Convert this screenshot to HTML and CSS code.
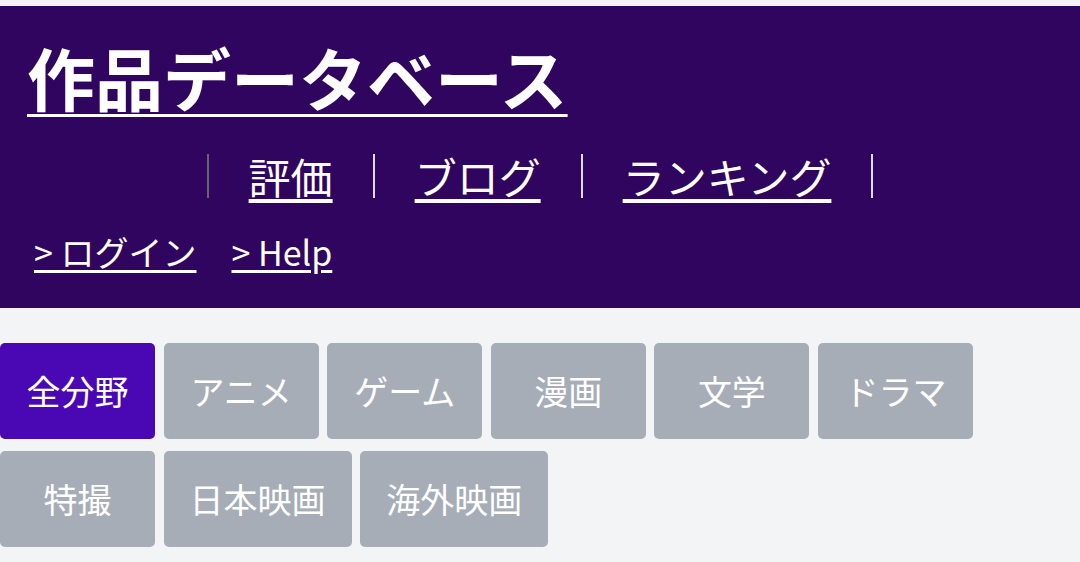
FILE: index.html
```html
<!DOCTYPE html>
<html lang="ja">
<head>
	<meta charset="utf-8">
	<title>作品データベース</title>
	<link rel="stylesheet" href="styles.css">
</head>
<body>
	<div class="header">
		<h1 class="title"><a href="#">作品データベース</a></h1>
		<ul class="nav">
			<li class="nav-item first"><a href="#">評価</a></li>
			<li class="nav-item"><a href="#">ブログ</a></li>
			<li class="nav-item"><a href="#">ランキング</a></li>
		</ul>
		<div class="user-links">
			<a href="#">&gt; ログイン</a>
			<a href="#">&gt; Help</a>
		</div>
	</div>
	<div class="genres">
		<a class="genre active" href="#">全分野</a>
		<a class="genre" href="#">アニメ</a>
		<a class="genre" href="#">ゲーム</a>
		<a class="genre" href="#">漫画</a>
		<a class="genre" href="#">文学</a>
		<a class="genre" href="#">ドラマ</a>
		<a class="genre" href="#">特撮</a>
		<a class="genre" href="#">日本映画</a>
		<a class="genre" href="#">海外映画</a>
	</div>
</body>
</html>
```

FILE: styles.css
```css
body { margin:0; background-color:#f3f4f6; font-family:"Noto Sans CJK JP", "Noto Sans", sans-serif; }
a { color:white; }

.header { margin-top:6px; background-color:#300560; padding:30px 0 36px 27px; }
.title { margin:0; font-size:68px; font-weight:bold; line-height:1.2; }
.title a { text-decoration-thickness:3px; text-underline-offset:8px; }

.nav { display:flex; justify-content:center; list-style:none; margin:36px 0 0; padding:0 27px 0 0; }
.nav-item { border-left:2px solid #dddddd; padding:0 40px; font-size:42px; line-height:44px; }
.nav-item.first { border-left-color:#666666; }
.nav-item:last-child { border-right:2px solid #dddddd; }
.nav-item a { text-underline-offset:5px; }

.user-links { margin-top:34px; padding-left:7px; font-size:34px; line-height:40px; display:flex; gap:35px; }
.user-links a { text-underline-offset:4px; }

.genres { display:flex; flex-wrap:wrap; gap:12px 8.6px; margin-top:35px; }
.genre { display:flex; align-items:center; justify-content:center; min-width:155px; box-sizing:border-box; height:96px; padding:0 26px; background-color:#a6adb7; border-radius:5px; font-size:34px; text-decoration:none; }
.genre.active { background-color:#4a08b4; }
```
